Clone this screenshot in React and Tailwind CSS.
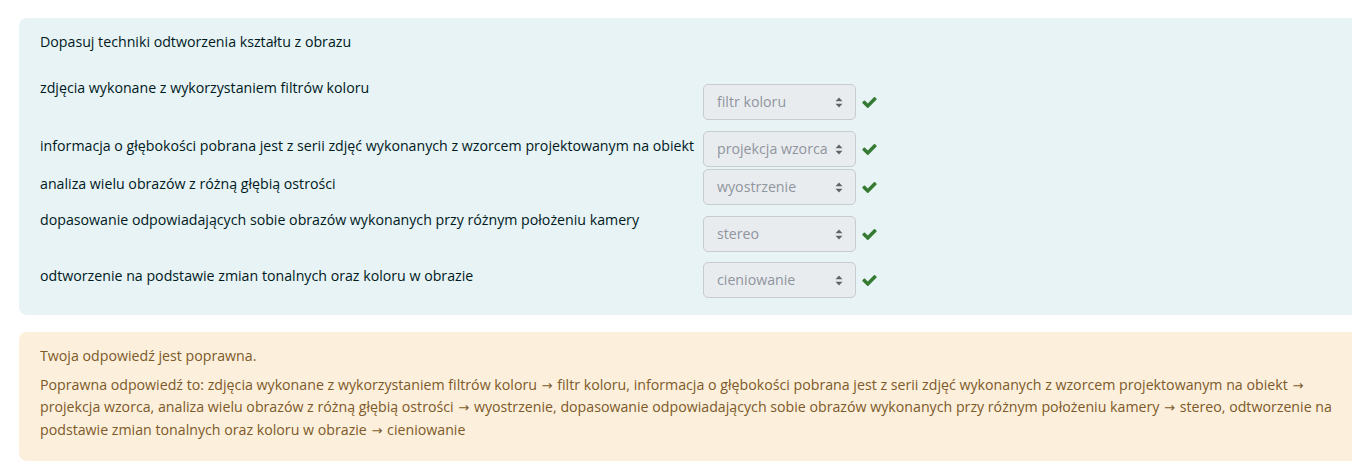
import { Fragment } from "react";

const rows = [
  { text: "zdjęcia wykonane z wykorzystaniem filtrów koloru", value: "filtr koloru", h: "h-[55px]", tp: "pt-[1px]", sp: "pt-[8px]" },
  { text: "informacja o głębokości pobrana jest z serii zdjęć wykonanych z wzorcem projektowanym na obiekt", value: "projekcja wzorca", h: "h-[38px]", tp: "pt-[4px]", sp: "pt-0" },
  { text: "analiza wielu obrazów z różną głębią ostrości", value: "wyostrzenie", h: "h-[39px]", tp: "pt-[4px]", sp: "pt-0" },
  { text: "dopasowanie odpowiadających sobie obrazów wykonanych przy różnym położeniu kamery", value: "stereo", h: "h-[54px]", tp: "pt-[1px]", sp: "pt-[8px]" },
  { text: "odtworzenie na podstawie zmian tonalnych oraz koloru w obrazie", value: "cieniowanie", h: "h-[36px]", tp: "pt-[3px]", sp: "pt-0" },
];

const pairs = [
  ["zdjęcia wykonane z wykorzystaniem filtrów koloru", "filtr koloru, "],
  ["informacja o głębokości pobrana jest z serii zdjęć wykonanych z wzorcem projektowanym na obiekt", "projekcja wzorca, "],
  ["analiza wielu obrazów z różną głębią ostrości", "wyostrzenie, "],
  ["dopasowanie odpowiadających sobie obrazów wykonanych przy różnym położeniu kamery", "stereo, "],
  ["odtworzenie na podstawie zmian tonalnych oraz koloru w obrazie", "cieniowanie"],
];

function Arrows() {
  return (
    <svg width="8" height="11" viewBox="0 0 8 11" className="shrink-0">
      <path d="M4 0.5 L7.5 4.2 L0.5 4.2 Z" fill="#5f6368" />
      <path d="M4 10.5 L7.5 6.8 L0.5 6.8 Z" fill="#5f6368" />
    </svg>
  );
}

function Check() {
  return (
    <svg width="15" height="13" viewBox="90 460 1620 920" className="shrink-0">
      <path
        d="M1671 566q0 40-28 68l-724 724-136 136q-28 28-68 28t-68-28l-136-136-362-362q-28-28-28-68t28-68l136-136q28-28 68-28t68 28l294 295 656-657q28-28 68-28t68 28l136 136q28 28 28 68z"
        fill="#357a32"
      />
    </svg>
  );
}

export default function App() {
  return (
    <div
      className="w-[1352px] h-[469px] overflow-hidden bg-white pt-[18px] pl-[19px] text-[14.2px] leading-[22.5px]"
      style={{ fontFamily: '"Open Sans", "Noto Sans", sans-serif' }}
    >
      <div className="rounded-l-[8px] bg-[#e7f3f5] pt-[13px] pb-[17px] pl-[21px] text-[#001a1e]">
        <div>Dopasuj techniki odtworzenia kształtu z obrazu</div>
        <div className="mt-[22.5px] flex flex-col">
          {rows.map((r) => (
            <div key={r.value} className={`flex ${r.h}`}>
              <div className={`w-[663px] shrink-0 whitespace-nowrap ${r.tp}`}>{r.text}</div>
              <div className={`flex items-start ${r.sp}`}>
                <div className="flex items-center gap-[6px]">
                  <div className="flex h-[36px] w-[153px] items-center justify-between rounded-[5px] border border-[#c8cccf] bg-[#e9ecef] pl-[13px] pr-[12px] text-[#8f959e]">
                    <span className="whitespace-nowrap">{r.value}</span>
                    <Arrows />
                  </div>
                  <Check />
                </div>
              </div>
            </div>
          ))}
        </div>
      </div>
      <div className="mt-[17px] rounded-l-[8px] bg-[#fcefdc] pt-[13px] pb-[20px] pl-[21px] pr-[10px] text-[#7d5a29]">
        <div>Twoja odpowiedź jest poprawna.</div>
        <div className="mt-[6px]">
          Poprawna odpowiedź to:{" "}
          {pairs.map(([a, b]) => (
            <Fragment key={a}>
              {a}{" "}
              <span className="mx-[1px] font-['DejaVu_Sans',sans-serif] text-[13px] leading-none">→</span> {b}
            </Fragment>
          ))}
        </div>
      </div>
    </div>
  );
}
